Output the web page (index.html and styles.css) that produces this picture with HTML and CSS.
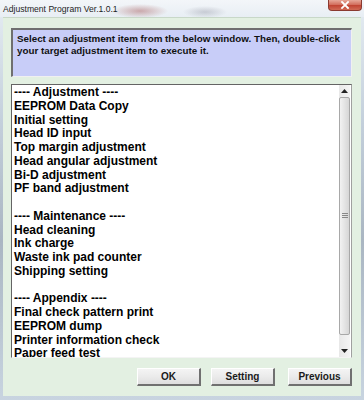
FILE: index.html
```html
<!DOCTYPE html>
<html>
<head>
<meta charset="utf-8">
<link rel="stylesheet" href="styles.css">
</head>
<body>
<div class="win">
  <div class="titlebar">
    <span class="title">Adjustment Program Ver.1.0.1</span>
    <div class="close"><svg width="10" height="8" viewBox="0 0 10 8"><path d="M2 1 L8 7 M8 1 L2 7" stroke="#fff" stroke-width="1.8" stroke-linecap="square"/></svg></div>
  </div>
  <div class="frame">
    <div class="info">Select an adjustment item from the below window. Then, double-click your target adjustment item to execute it.</div>
    <div class="list">
      <div class="items">
        <div>---- Adjustment ----</div>
        <div>EEPROM Data Copy</div>
        <div>Initial setting</div>
        <div>Head ID input</div>
        <div>Top margin adjustment</div>
        <div>Head angular adjustment</div>
        <div>Bi-D adjustment</div>
        <div>PF band adjustment</div>
        <div>&nbsp;</div>
        <div>---- Maintenance ----</div>
        <div>Head cleaning</div>
        <div>Ink charge</div>
        <div>Waste ink pad counter</div>
        <div>Shipping setting</div>
        <div>&nbsp;</div>
        <div>---- Appendix ----</div>
        <div>Final check pattern print</div>
        <div>EEPROM dump</div>
        <div>Printer information check</div>
        <div>Paper feed test</div>
      </div>
      <div class="scroll">
        <div class="arrow"><svg width="7" height="4" viewBox="0 0 7 4"><path d="M0 4 L3.5 0 L7 4 Z" fill="#222"/></svg></div>
        <div class="thumb"><svg width="6" height="6" viewBox="0 0 6 6"><path d="M0 0.5H6M0 2.5H6M0 4.5H6" stroke="#888" stroke-width="1"/></svg></div>
        <div class="arrow"><svg width="7" height="4" viewBox="0 0 7 4"><path d="M0 0 L3.5 4 L7 0 Z" fill="#222"/></svg></div>
      </div>
    </div>
    <div class="buttons">
      <button class="btn">OK</button>
      <button class="btn">Setting</button>
      <button class="btn prev">Previous</button>
    </div>
  </div>
</div>
</body>
</html>
```
FILE: styles.css
```css
html, body {
  margin: 0;
  padding: 0;
}
body {
  width: 364px;
  height: 400px;
  overflow: hidden;
  background: linear-gradient(180deg, #e6edf3 0%, #c4d0dc 30%, #aab6c2 60%, #c8d4e0 100%);
}
.win {
  width: 364px;
  height: 400px;
  display: flex;
  flex-direction: column;
}
.titlebar {
  position: relative;
  height: 17px;
  flex: none;
  display: flex;
  align-items: center;
  padding-left: 3px;
  background:
    radial-gradient(ellipse 28px 7px at 140px 11px, rgba(150, 60, 60, 0.4), rgba(150, 60, 60, 0) 100%),
    radial-gradient(ellipse 22px 6px at 205px 12px, rgba(90, 90, 110, 0.25), rgba(90, 90, 110, 0) 100%),
    linear-gradient(180deg, #f3f6f9 0%, #e8eef4 100%);
}
.title {
  font-family: "Liberation Sans", Arial, sans-serif;
  font-size: 8.6px;
  color: #1e1e1e;
  padding-top: 1px;
}
.close {
  position: absolute;
  right: 2px;
  top: 0;
  width: 34px;
  height: 11px;
  border-radius: 0 0 4px 4px;
  background: linear-gradient(180deg, #e7a899 0%, #d3705f 45%, #c14534 55%, #d06a55 100%);
  border: 1px solid #8a3a30;
  border-top: none;
  box-sizing: border-box;
  display: flex;
  align-items: center;
  justify-content: center;
}
.frame {
  flex: 1;
  margin: 0 3px 4px 3px;
  background: #e3f0e2;
  border-top: 1px solid #c8d8c8;
  box-sizing: border-box;
  padding: 10px 9px 0 8px;
  display: flex;
  flex-direction: column;
}
.info {
  height: 49px;
  box-sizing: border-box;
  background: #c8cdf8;
  border-top: 2px solid #6f6f6f;
  border-left: 2px solid #6f6f6f;
  border-right: 1px solid #f0f0f0;
  border-bottom: 1px solid #f0f0f0;
  padding: 3px 4px 0 4px;
  font-family: "Liberation Sans", Arial, sans-serif;
  font-weight: bold;
  font-size: 9.8px;
  line-height: 12px;
  color: #111;
}
.list {
  margin-top: 7px;
  height: 274px;
  box-sizing: border-box;
  background: #fff;
  border-top: 1px solid #646464;
  border-left: 1px solid #646464;
  border-right: 1px solid #a0a0a0;
  border-bottom: 1px solid #f4f4f4;
  display: flex;
  overflow: hidden;
}
.items {
  flex: 1;
  padding-left: 2px;
  padding-top: 1px;
  font-family: "Liberation Sans", Arial, sans-serif;
  font-weight: bold;
  font-size: 12px;
  line-height: 13.75px;
  color: #000;
  overflow: hidden;
  white-space: nowrap;
}
.scroll {
  width: 11px;
  flex: none;
  background: linear-gradient(90deg, #e8e8e8, #f4f4f4);
  display: flex;
  flex-direction: column;
  margin-right: 1px;
}
.arrow {
  height: 12px;
  flex: none;
  display: flex;
  align-items: center;
  justify-content: center;
}
.thumb {
  flex: 1;
  margin: 0 0 10px 0;
  box-sizing: border-box;
  border: 1px solid #a8a8a8;
  border-radius: 2px;
  background: linear-gradient(90deg, #f2f2f2 0%, #e4e4e4 50%, #d6d6d6 100%);
  display: flex;
  align-items: center;
  justify-content: center;
}
.buttons {
  display: flex;
  justify-content: flex-end;
  padding-top: 10px;
  gap: 10px;
}
.btn {
  width: 64px;
  height: 18px;
  margin: 0;
  padding: 0;
  box-sizing: border-box;
  background: linear-gradient(180deg, #f4f4f4 0%, #ebebeb 50%, #dedede 100%);
  border-top: 1px solid #ffffff;
  border-left: 1px solid #ffffff;
  border-right: 2px solid #707070;
  border-bottom: 2px solid #707070;
  font-family: "Liberation Sans", Arial, sans-serif;
  font-weight: bold;
  font-size: 10px;
  color: #1a1a1a;
}
.prev {
  margin-left: 3px;
}
```
